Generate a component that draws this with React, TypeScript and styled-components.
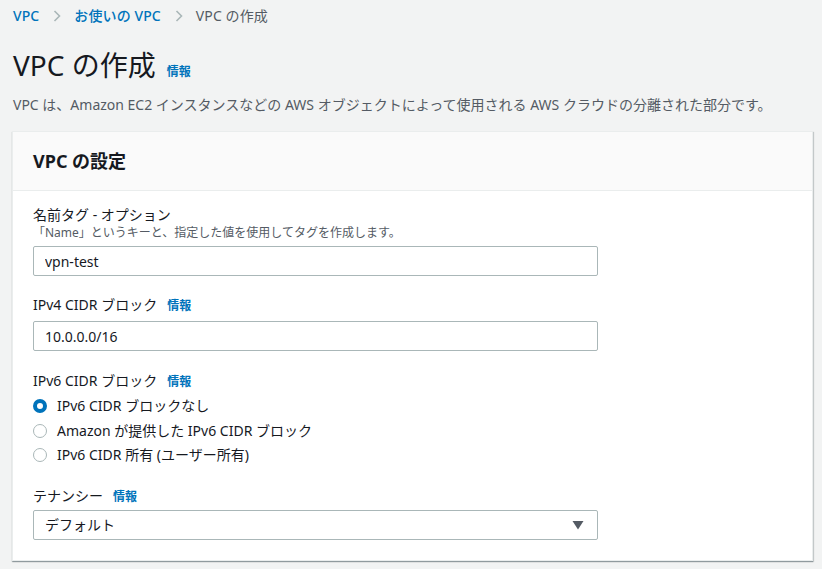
import { createGlobalStyle } from "styled-components";
import styled from "styled-components";

const GlobalStyle = createGlobalStyle`
  html, body {
    margin: 0;
    padding: 0;
    background: #f2f3f3;
  }
  body {
    font-family: "Noto Sans", "Noto Sans CJK JP", sans-serif;
    color: #16191f;
    -webkit-font-smoothing: antialiased;
  }
`;

const Page = styled.div`
  padding: 6px 9px 8px 13px;
  display: flex;
  flex-direction: column;
`;

const Breadcrumbs = styled.nav`
  display: flex;
  align-items: center;
  height: 20px;
  font-size: 14px;
  line-height: 20px;
`;

const Crumb = styled.span<{ $current?: boolean }>`
  color: ${(p) => (p.$current ? "#545b64" : "#0073bb")};
  font-weight: ${(p) => (p.$current ? 400 : 500)};
  letter-spacing: 0.1px;
`;

const Separator = styled.span`
  display: inline-flex;
  align-items: center;
  margin: 0 13px 0 14px;
`;

const TitleRow = styled.div`
  display: flex;
  align-items: baseline;
  margin-top: 21px;
  gap: 11px;
`;

const Title = styled.h1`
  margin: 0;
  font-size: 28px;
  line-height: 36px;
  font-weight: 400;
  color: #16191f;
`;

const InfoLink = styled.a`
  font-size: 12px;
  font-weight: 700;
  color: #0073bb;
  text-decoration: none;
  line-height: 16px;
`;

const Description = styled.p`
  margin: 12px 0 0;
  font-size: 14px;
  line-height: 20px;
  color: #545b64;
`;

const Card = styled.section`
  margin: 16px 0 0 -1px;
  background: #fff;
  border: 1px solid #eaeded;
  box-shadow: 0 1px 1px 0 rgba(0, 28, 36, 0.3), 1px 1px 1px 0 rgba(0, 28, 36, 0.15);
`;

const CardHeader = styled.header`
  height: 58px;
  padding: 0 20px;
  display: flex;
  align-items: center;
  background: #fafafa;
  border-bottom: 1px solid #eaeded;
`;

const CardTitle = styled.h2`
  margin: 0;
  font-size: 18px;
  line-height: 22px;
  font-weight: 700;
  color: #16191f;
`;

const CardBody = styled.div`
  padding: 14px 20px 20px;
  display: flex;
  flex-direction: column;
`;

const Field = styled.div<{ $gap?: number }>`
  display: flex;
  flex-direction: column;
  margin-top: ${(p) => p.$gap ?? 0}px;
`;

const LabelRow = styled.div`
  display: flex;
  align-items: baseline;
  gap: 10px;
  font-size: 14px;
  line-height: 20px;
  color: #16191f;
`;

const Hint = styled.div`
  font-size: 12px;
  line-height: 16px;
  color: #545b64;
`;

const Input = styled.input<{ $top: number }>`
  box-sizing: border-box;
  width: 565px;
  height: 30px;
  margin-top: ${(p) => p.$top}px;
  padding: 0 11px;
  border: 1px solid #aab7b8;
  border-radius: 2px;
  font-family: inherit;
  font-size: 14px;
  color: #16191f;
  background: #fff;
  outline: none;
`;

const RadioGroup = styled.div`
  display: flex;
  flex-direction: column;
  margin-top: 3px;
`;

const RadioRow = styled.label`
  display: flex;
  align-items: center;
  height: 24.5px;
  line-height: 20px;
  gap: 10px;
  font-size: 14px;
  color: #16191f;
  cursor: pointer;
`;

const RadioDot = styled.span<{ $checked?: boolean }>`
  box-sizing: border-box;
  width: 14px;
  height: 14px;
  border-radius: 50%;
  background: #fff;
  border: ${(p) => (p.$checked ? "4px solid #0073bb" : "1.5px solid #aab7b8")};
  flex: none;
`;

const Select = styled.div`
  box-sizing: border-box;
  width: 565px;
  height: 30px;
  margin-top: 4px;
  padding: 0 13px 0 11px;
  display: flex;
  align-items: center;
  justify-content: space-between;
  border: 1px solid #aab7b8;
  border-radius: 2px;
  background: #fff;
  font-size: 14px;
  line-height: 20px;
  color: #16191f;
`;

const Chevron = () => (
  <svg width="8" height="12" viewBox="0 0 8 12" fill="none">
    <path d="M1.5 1 L6.5 6 L1.5 11" stroke="#aab7b8" strokeWidth="1.6" />
  </svg>
);

const Caret = () => (
  <svg width="12" height="10" viewBox="0 0 12 10">
    <path d="M0.5 1 H11.5 L6 9.5 Z" fill="#545b64" />
  </svg>
);

const radios = [
  { label: "IPv6 CIDR ブロックなし", checked: true },
  { label: "Amazon が提供した IPv6 CIDR ブロック" },
  { label: "IPv6 CIDR 所有 (ユーザー所有)" },
];

export default function App() {
  return (
    <Page>
      <GlobalStyle />
      <Breadcrumbs>
        <Crumb>VPC</Crumb>
        <Separator>
          <Chevron />
        </Separator>
        <Crumb>お使いの VPC</Crumb>
        <Separator>
          <Chevron />
        </Separator>
        <Crumb $current>VPC の作成</Crumb>
      </Breadcrumbs>

      <TitleRow>
        <Title>VPC の作成</Title>
        <InfoLink href="#">情報</InfoLink>
      </TitleRow>
      <Description>
        VPC は、Amazon EC2 インスタンスなどの AWS オブジェクトによって使用される AWS クラウドの分離された部分です。
      </Description>

      <Card>
        <CardHeader>
          <CardTitle>VPC の設定</CardTitle>
        </CardHeader>
        <CardBody>
          <Field>
            <LabelRow>名前タグ - オプション</LabelRow>
            <Hint>「Name」というキーと、指定した値を使用してタグを作成します。</Hint>
            <Input $top={5} defaultValue="vpn-test" />
          </Field>

          <Field $gap={19}>
            <LabelRow>
              IPv4 CIDR ブロック
              <InfoLink href="#">情報</InfoLink>
            </LabelRow>
            <Input $top={6} defaultValue="10.0.0.0/16" />
          </Field>

          <Field $gap={20}>
            <LabelRow>
              IPv6 CIDR ブロック
              <InfoLink href="#">情報</InfoLink>
            </LabelRow>
            <RadioGroup>
              {radios.map((r) => (
                <RadioRow key={r.label}>
                  <RadioDot $checked={r.checked} />
                  {r.label}
                </RadioRow>
              ))}
            </RadioGroup>
          </Field>

          <Field $gap={18}>
            <LabelRow>
              テナンシー
              <InfoLink href="#">情報</InfoLink>
            </LabelRow>
            <Select>
              <span>デフォルト</span>
              <Caret />
            </Select>
          </Field>
        </CardBody>
      </Card>
    </Page>
  );
}
